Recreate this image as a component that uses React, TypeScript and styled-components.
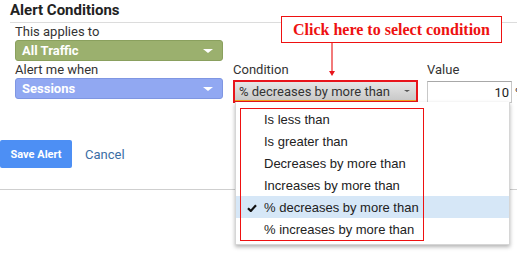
import React from "react";
import styled, { createGlobalStyle } from "styled-components";

const Global = createGlobalStyle`
  html, body { margin: 0; padding: 0; background: #fff; overflow: hidden; }
  body { width: 517px; height: 265px; font-family: Roboto, "Liberation Sans", sans-serif; }
`;

const Page = styled.div`
  position: relative;
  width: 517px;
  height: 265px;
  overflow: hidden;
`;

const Header = styled.div`
  margin-left: 10px;
  border-bottom: 1px solid #dcdcdc;
  font-size: 15px;
  font-weight: 700;
  color: #222;
  line-height: 20px;
  box-sizing: border-box;
  height: 23px;
`;

const Form = styled.div`
  padding-left: 15px;
`;

const Label = styled.div`
  font-size: 13px;
  color: #333;
  line-height: 15px;
  height: 15px;
`;

const FirstLabel = styled(Label)`
  margin-top: 1px;
  margin-bottom: 1px;
`;

const ColorSelect = styled.div<{ $bg: string; $border: string }>`
  box-sizing: border-box;
  width: 208px;
  height: 21px;
  border-radius: 3px;
  background: ${(p) => p.$bg};
  border: 1px solid ${(p) => p.$border};
  display: flex;
  align-items: center;
  justify-content: space-between;
  padding: 0 9px 0 6px;
  color: #fff;
  font-weight: 700;
  font-size: 13px;
`;

const Caret = styled.span<{ $color: string; $w: number }>`
  width: 0;
  height: 0;
  border-left: ${(p) => p.$w}px solid transparent;
  border-right: ${(p) => p.$w}px solid transparent;
  border-top: ${(p) => Math.round(p.$w * 0.8)}px solid ${(p) => p.$color};
`;

const Row = styled.div`
  display: flex;
  margin-top: 1px;
`;

const Col = styled.div<{ $w: number; $ml?: number }>`
  width: ${(p) => p.$w}px;
  margin-left: ${(p) => p.$ml || 0}px;
  display: flex;
  flex-direction: column;
`;

const RowLabel = styled(Label)`
  margin-bottom: 1px;
`;

const CondOutline = styled.div`
  box-sizing: border-box;
  width: 185px;
  height: 23px;
  border: 2px solid #e8141c;
  margin-top: 3px;
  background: #fff;
`;

const CondSelect = styled.div`
  height: 100%;
  box-sizing: border-box;
  background: linear-gradient(#e6e6e6, #c9c9c9);
  border-bottom: 1px solid #f2a21e;
  display: flex;
  align-items: center;
  justify-content: space-between;
  padding: 0 6px 0 4px;
  font-size: 13px;
  color: #333;
`;

const ValueWrap = styled.div`
  display: flex;
  align-items: center;
  margin-top: 4px;
`;

const ValueBox = styled.div`
  box-sizing: border-box;
  width: 85px;
  height: 22px;
  border: 1px solid #c8c8c8;
  border-top-color: #a8a8a8;
  display: flex;
  align-items: center;
  justify-content: flex-end;
  padding-right: 2px;
  font-size: 13px;
  color: #222;
  flex-shrink: 0;
`;

const Suffix = styled.span`
  margin-left: 3px;
  font-size: 13px;
  color: #333;
`;

const Actions = styled.div`
  display: flex;
  align-items: center;
  margin-top: 37px;
  height: 28px;
`;

const SaveButton = styled.div`
  box-sizing: border-box;
  width: 72px;
  height: 28px;
  background: #4d8ff4;
  border-radius: 2px;
  color: #fff;
  font-size: 11px;
  font-weight: 700;
  display: flex;
  align-items: center;
  justify-content: center;
`;

const CancelLink = styled.span`
  margin-left: 13px;
  font-size: 13px;
  color: #3b6ea5;
`;

const Divider = styled.div`
  margin-top: 21px;
  height: 1px;
  background: #cfcfcf;
`;

const Callout = styled.div`
  position: absolute;
  left: 281px;
  top: 16px;
  width: 221px;
  height: 27px;
  box-sizing: border-box;
  border: 1px solid #ee1111;
  background: #fff;
  color: #ee1111;
  font-family: "Liberation Serif", serif;
  font-weight: 700;
  font-size: 16px;
  display: flex;
  align-items: center;
  justify-content: center;
`;

const ArrowLine = styled.div`
  position: absolute;
  left: 331px;
  top: 43px;
  width: 2px;
  height: 30px;
  background: #f27a7a;
`;

const ArrowHead = styled.div`
  position: absolute;
  left: 329px;
  top: 71px;
  width: 0;
  height: 0;
  border-left: 3px solid transparent;
  border-right: 3px solid transparent;
  border-top: 5px solid #e8141c;
`;

const Menu = styled.div`
  position: absolute;
  left: 235px;
  top: 102px;
  width: 275px;
  height: 143px;
  box-sizing: border-box;
  background: #fff;
  border: 1px solid #d6d6d6;
  border-top: none;
  box-shadow: 0 2px 4px rgba(0, 0, 0, 0.3);
  padding-top: 6px;
`;

const Item = styled.div<{ $selected?: boolean }>`
  position: relative;
  height: 22px;
  line-height: 23px;
  padding-left: 28px;
  font-family: "Liberation Sans", Arial, sans-serif;
  font-size: 13px;
  color: #222;
  background: ${(p) => (p.$selected ? "#d6e7f7" : "transparent")};
`;

const Check = styled.svg`
  position: absolute;
  left: 11px;
  top: 8px;
`;

const MenuOutline = styled.div`
  position: absolute;
  left: 240px;
  top: 108px;
  width: 184px;
  height: 133px;
  box-sizing: border-box;
  border: 1.5px solid #ee1111;
  pointer-events: none;
`;

const items = [
  "Is less than",
  "Is greater than",
  "Decreases by more than",
  "Increases by more than",
  "% decreases by more than",
  "% increases by more than",
];

export default function App() {
  return (
    <Page>
      <Global />
      <Header>Alert Conditions</Header>
      <Form>
        <FirstLabel>This applies to</FirstLabel>
        <ColorSelect $bg="#9bb06e" $border="#8aa05e">
          All Traffic
          <Caret $color="#fff" $w={5} />
        </ColorSelect>
        <Row>
          <Col $w={208}>
            <RowLabel>Alert me when</RowLabel>
            <ColorSelect $bg="#91a8f2" $border="#7f96e2">
              Sessions
              <Caret $color="#fff" $w={5} />
            </ColorSelect>
          </Col>
          <Col $w={185} $ml={10}>
            <Label>Condition</Label>
            <CondOutline>
              <CondSelect>
                % decreases by more than
                <Caret $color="#555" $w={3} />
              </CondSelect>
            </CondOutline>
          </Col>
          <Col $w={100} $ml={9}>
            <Label>Value</Label>
            <ValueWrap>
              <ValueBox>10</ValueBox>
              <Suffix>%</Suffix>
            </ValueWrap>
          </Col>
        </Row>
      </Form>
      <Actions>
        <SaveButton>Save Alert</SaveButton>
        <CancelLink>Cancel</CancelLink>
      </Actions>
      <Divider />

      <Callout>Click here to select condition</Callout>
      <ArrowLine />
      <ArrowHead />

      <Menu>
        {items.map((t, i) => (
          <Item key={t} $selected={i === 4}>
            {i === 4 && (
              <Check width="10" height="8" viewBox="0 0 10 8">
                <path d="M1 4.2 L3.8 7 L9 1.2" fill="none" stroke="#111" strokeWidth="2.2" />
              </Check>
            )}
            {t}
          </Item>
        ))}
      </Menu>
      <MenuOutline />
    </Page>
  );
}
